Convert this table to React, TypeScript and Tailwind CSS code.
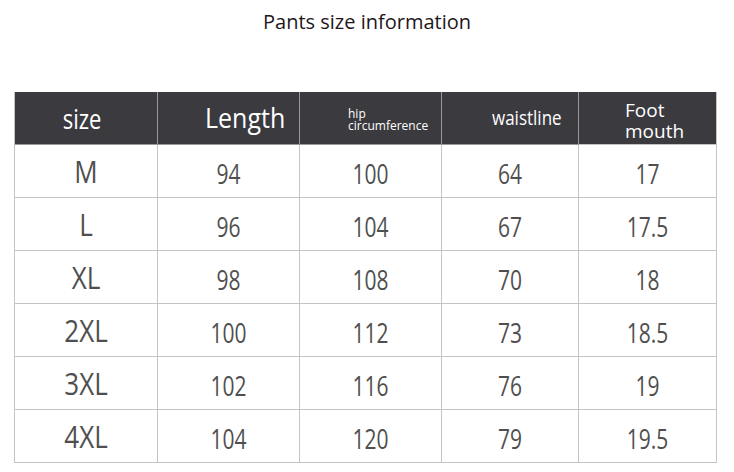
const rows = [
  { size: 'M', length: '94', hip: '100', waist: '64', foot: '17' },
  { size: 'L', length: '96', hip: '104', waist: '67', foot: '17.5' },
  { size: 'XL', length: '98', hip: '108', waist: '70', foot: '18' },
  { size: '2XL', length: '100', hip: '112', waist: '73', foot: '18.5' },
  { size: '3XL', length: '102', hip: '116', waist: '76', foot: '19' },
  { size: '4XL', length: '104', hip: '120', waist: '79', foot: '19.5' },
]

const cell = 'flex h-[53px] items-center justify-center border-r border-b border-[#c4c4c4]'

export default function App() {
  return (
    <div className="h-[472px] w-[734px] bg-white font-['Open_Sans',sans-serif]">
      <h1 className="pt-[8px] text-center text-[20px] leading-[28px] text-[#1f1620]">Pants size information</h1>

      <div className="ml-[14px] mt-[56px] grid w-[703px] grid-cols-[143px_142px_142px_137px_138px] border-l border-[#c4c4c4]">
        {/* header */}
        <div className="flex h-[53px] items-center justify-center border-r border-b border-[#9a9a9a] bg-[#3b3a3f] pr-[8px] text-[22px] text-white">
          <span className="inline-block scale-y-[1.2]">size</span>
        </div>
        <div className="flex h-[53px] items-center border-r border-b border-[#9a9a9a] bg-[#3b3a3f] pl-[47px] text-[25px] text-white">
          <span className="inline-block scale-y-[1.1]">Length</span>
        </div>
        <div className="flex h-[53px] flex-col justify-center border-r border-b border-[#9a9a9a] bg-[#3b3a3f] pl-[48px] text-[12px] leading-[12px] text-white">
          <span className="translate-y-[2px]">hip</span>
          <span className="translate-y-[2px]">circumference</span>
        </div>
        <div className="flex h-[53px] items-center border-r border-b border-[#9a9a9a] bg-[#3b3a3f] pl-[50px] text-[17px] text-white">
          <span className="inline-block scale-y-[1.15]">waistline</span>
        </div>
        <div className="flex h-[53px] flex-col justify-center border-r border-b border-[#c4c4c4] bg-[#3b3a3f] pl-[46px] text-[19px] leading-[21px] text-white">
          <span className="translate-y-[3px]">Foot</span>
          <span className="translate-y-[3px]">mouth</span>
        </div>

        {rows.map((r) => (
          <div key={r.size} className="contents text-[#4f4f4f]">
            <div className={cell}>
              <span className="inline-block scale-y-[1.2] text-[26px]">{r.size}</span>
            </div>
            {[r.length, r.hip, r.waist, r.foot].map((v, i) => (
              <div key={i} className={cell}>
                <span className="inline-block translate-y-[4px] scale-y-[1.3] text-[21px]">{v}</span>
              </div>
            ))}
          </div>
        ))}
      </div>
    </div>
  )
}
